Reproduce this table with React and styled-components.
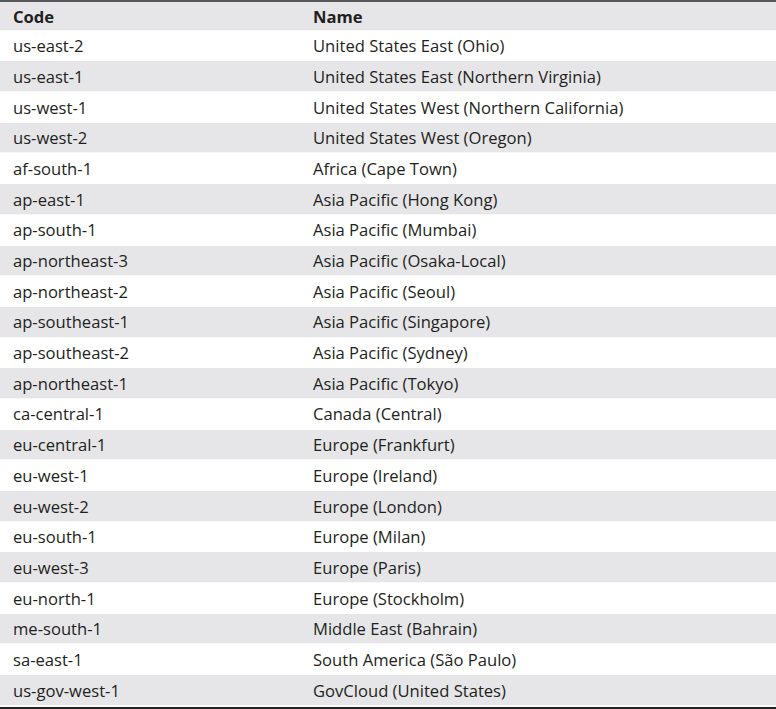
import React from "react";
import styled, { createGlobalStyle } from "styled-components";

const Global = createGlobalStyle`
  html, body { margin: 0; padding: 0; background: #fff; }
  body { font-family: "Open Sans", "Liberation Sans", sans-serif; }
`;

const rows = [
  ["us-east-2", "United States East (Ohio)"],
  ["us-east-1", "United States East (Northern Virginia)"],
  ["us-west-1", "United States West (Northern California)"],
  ["us-west-2", "United States West (Oregon)"],
  ["af-south-1", "Africa (Cape Town)"],
  ["ap-east-1", "Asia Pacific (Hong Kong)"],
  ["ap-south-1", "Asia Pacific (Mumbai)"],
  ["ap-northeast-3", "Asia Pacific (Osaka-Local)"],
  ["ap-northeast-2", "Asia Pacific (Seoul)"],
  ["ap-southeast-1", "Asia Pacific (Singapore)"],
  ["ap-southeast-2", "Asia Pacific (Sydney)"],
  ["ap-northeast-1", "Asia Pacific (Tokyo)"],
  ["ca-central-1", "Canada (Central)"],
  ["eu-central-1", "Europe (Frankfurt)"],
  ["eu-west-1", "Europe (Ireland)"],
  ["eu-west-2", "Europe (London)"],
  ["eu-south-1", "Europe (Milan)"],
  ["eu-west-3", "Europe (Paris)"],
  ["eu-north-1", "Europe (Stockholm)"],
  ["me-south-1", "Middle East (Bahrain)"],
  ["sa-east-1", "South America (São Paulo)"],
  ["us-gov-west-1", "GovCloud (United States)"],
];

const Table = styled.div`
  width: 776px;
  border-top: 2px solid #58585a;
  display: flex;
  flex-direction: column;
  color: #231f20;
`;

const Row = styled.div`
  display: grid;
  grid-template-columns: 300px 1fr;
  height: ${(p) => (p.$header ? "28.7px" : "30.7px")};
  align-items: center;
  background: ${(p) => (p.$shaded ? "#e6e6e8" : "#ffffff")};
  box-shadow: inset 0 -1px 0 rgba(255, 255, 255, 0.7);
`;

const Cell = styled.div`
  padding-left: 13px;
  padding-top: 1px;
  font-size: 16.6px;
  font-weight: ${(p) => (p.$bold ? 700 : 400)};
  white-space: nowrap;
  line-height: 1;
`;

const BottomRule = styled.div`
  margin-top: 1px;
  height: 3px;
  background: #231f20;
`;

export default function App() {
  return (
    <>
      <Global />
      <Table>
        <Row $header $shaded>
          <Cell $bold>Code</Cell>
          <Cell $bold>Name</Cell>
        </Row>
        {rows.map(([code, name], i) => (
          <Row key={code} $shaded={i % 2 === 1}>
            <Cell>{code}</Cell>
            <Cell>{name}</Cell>
          </Row>
        ))}
        <BottomRule />
      </Table>
    </>
  );
}
